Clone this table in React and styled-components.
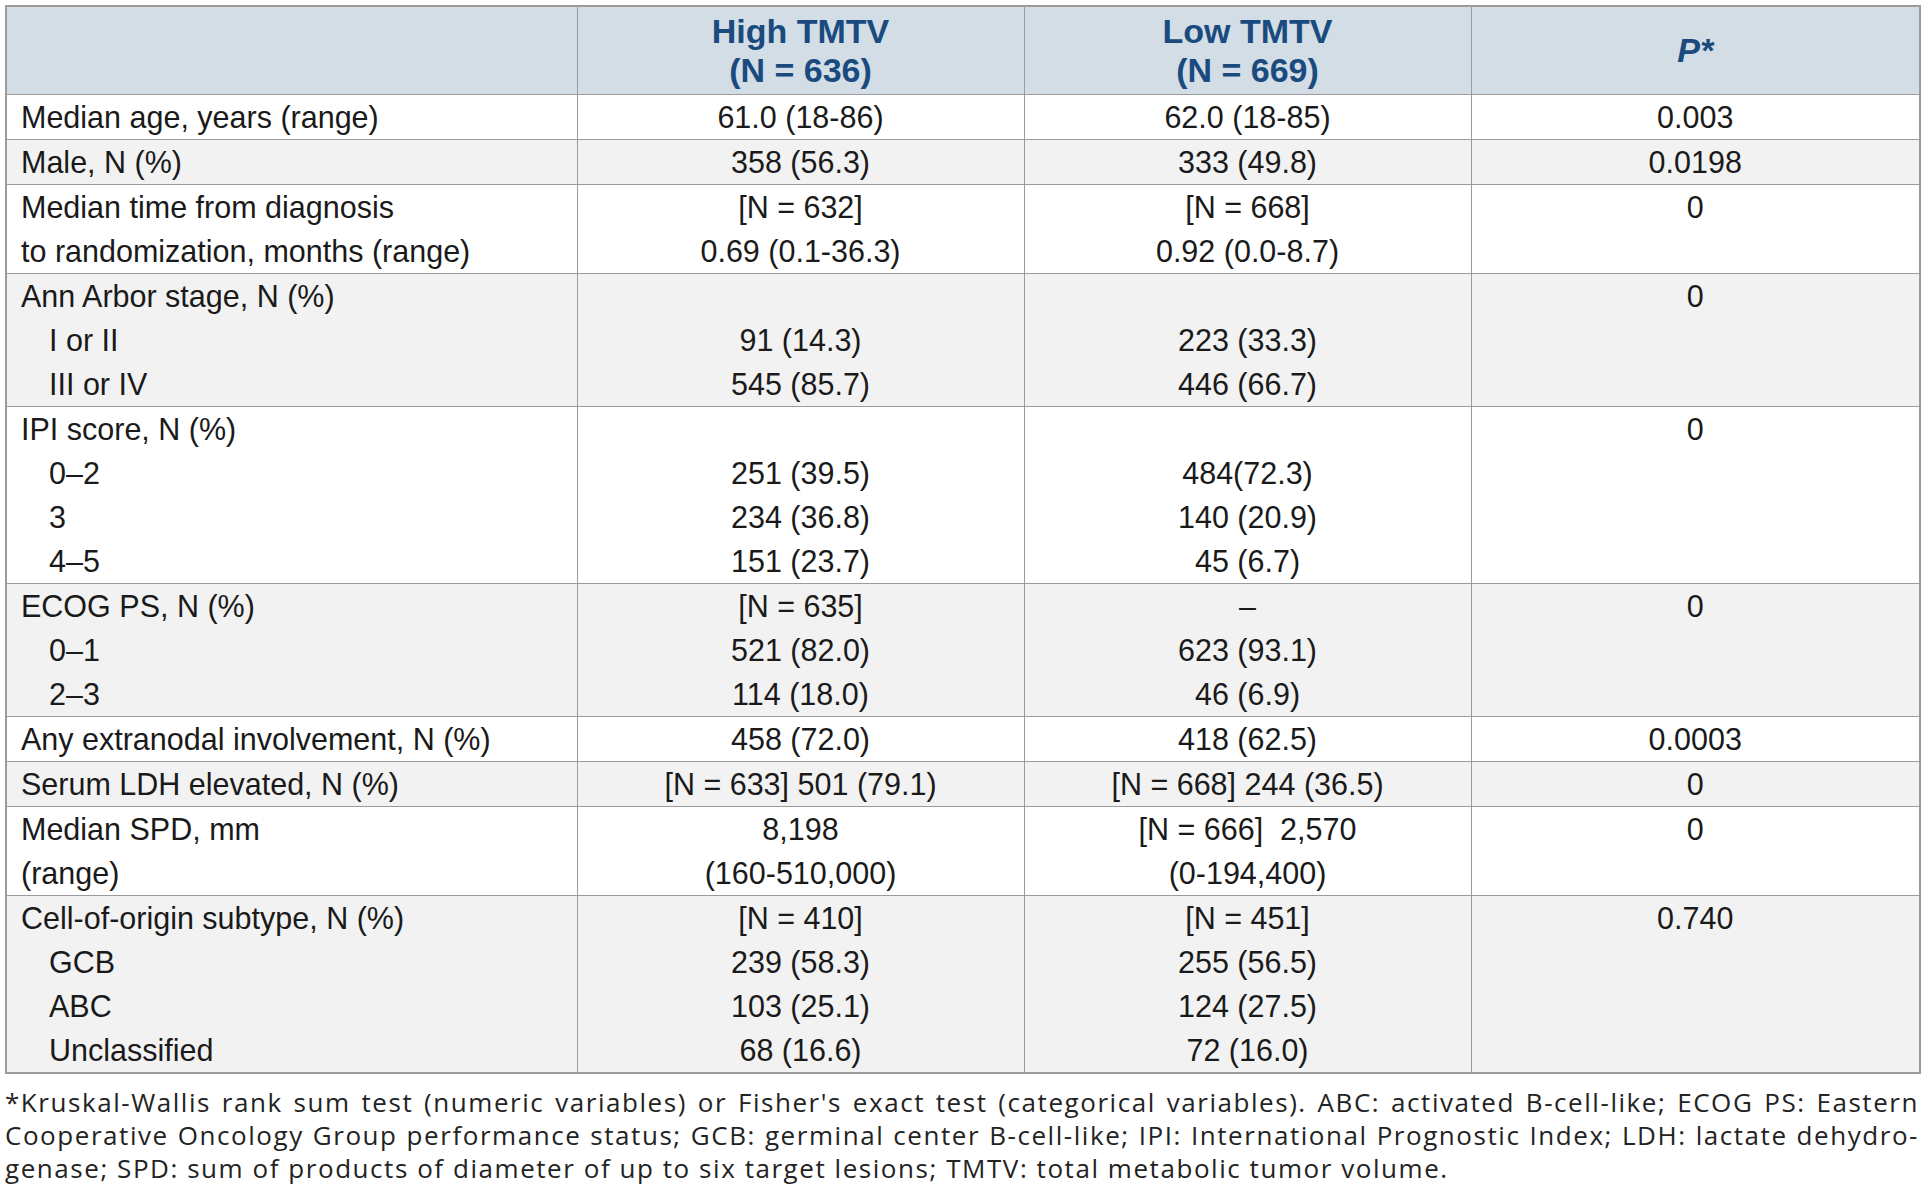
import React from 'react';
import styled, { createGlobalStyle } from 'styled-components';

const GlobalStyle = createGlobalStyle`
  html, body {
    margin: 0;
    padding: 0;
    background: #ffffff;
  }
`;

const Page = styled.div`
  padding: 5px 10px 0 5px;
  width: 1914px;
  font-family: "Liberation Sans", Arial, sans-serif;
  color: #1a1a1a;
`;

const Table = styled.table`
  width: 1914px;
  table-layout: fixed;
  border-collapse: collapse;
  border: 2px solid #9b9b9b;
`;

const HeadRow = styled.tr`
  background: #d3dde6;
`;

const HeadCell = styled.th`
  height: 87px;
  padding: 0;
  border-left: 1px solid #9b9b9b;
  border-bottom: 1px solid #9b9b9b;
  color: #1a4b7f;
  font-size: 34px;
  font-weight: 700;
  font-style: ${(p) => (p.$italic ? 'italic' : 'normal')};
  line-height: 39px;
  text-align: center;
  vertical-align: middle;
`;

const Row = styled.tr`
  background: ${(p) => (p.$shade ? '#f2f2f2' : '#ffffff')};
  border-bottom: 1px solid #9b9b9b;
`;

const Cell = styled.td`
  padding: 0;
  padding-left: ${(p) => (p.$label ? '14px' : '0')};
  border-left: 1px solid #9b9b9b;
  vertical-align: top;
  text-align: ${(p) => (p.$label ? 'left' : 'center')};
  font-size: 30.5px;
`;

const Line = styled.div`
  height: 44px;
  line-height: 44px;
  white-space: pre;
  padding-left: ${(p) => (p.$indent ? '28px' : '0')};
`;

const Notes = styled.div`
  margin-top: 12px;
  width: 1914px;
  font-family: "Open Sans", "Noto Sans", sans-serif;
  font-size: 26px;
  letter-spacing: 1.55px;
  color: #232323;
`;

const NoteLine = styled.div`
  height: 33px;
  line-height: 33px;
  white-space: nowrap;
  text-align: ${(p) => (p.$justify ? 'justify' : 'left')};
  text-align-last: ${(p) => (p.$justify ? 'justify' : 'left')};
`;

const rows = [
  {
    label: ['Median age, years (range)'],
    high: ['61.0 (18-86)'],
    low: ['62.0 (18-85)'],
    p: '0.003',
  },
  {
    label: ['Male, N (%)'],
    high: ['358 (56.3)'],
    low: ['333 (49.8)'],
    p: '0.0198',
  },
  {
    label: ['Median time from diagnosis', 'to randomization, months (range)'],
    high: ['[N = 632]', '0.69 (0.1-36.3)'],
    low: ['[N = 668]', '0.92 (0.0-8.7)'],
    p: '0',
  },
  {
    label: ['Ann Arbor stage, N (%)', '>I or II', '>III or IV'],
    high: ['', '91 (14.3)', '545 (85.7)'],
    low: ['', '223 (33.3)', '446 (66.7)'],
    p: '0',
  },
  {
    label: ['IPI score, N (%)', '>0–2', '>3', '>4–5'],
    high: ['', '251 (39.5)', '234 (36.8)', '151 (23.7)'],
    low: ['', '484(72.3)', '140 (20.9)', '45 (6.7)'],
    p: '0',
  },
  {
    label: ['ECOG PS, N (%)', '>0–1', '>2–3'],
    high: ['[N = 635]', '521 (82.0)', '114 (18.0)'],
    low: ['–', '623 (93.1)', '46 (6.9)'],
    p: '0',
  },
  {
    label: ['Any extranodal involvement, N (%)'],
    high: ['458 (72.0)'],
    low: ['418 (62.5)'],
    p: '0.0003',
  },
  {
    label: ['Serum LDH elevated, N (%)'],
    high: ['[N = 633] 501 (79.1)'],
    low: ['[N = 668] 244 (36.5)'],
    p: '0',
  },
  {
    label: ['Median SPD, mm', '(range)'],
    high: ['8,198', '(160-510,000)'],
    low: ['[N = 666]  2,570', '(0-194,400)'],
    p: '0',
  },
  {
    label: ['Cell-of-origin subtype, N (%)', '>GCB', '>ABC', '>Unclassified'],
    high: ['[N = 410]', '239 (58.3)', '103 (25.1)', '68 (16.6)'],
    low: ['[N = 451]', '255 (56.5)', '124 (27.5)', '72 (16.0)'],
    p: '0.740',
  },
];

function Lines({ items }) {
  return items.map((text, i) => {
    const indent = text.startsWith('>');
    return (
      <Line key={i} $indent={indent}>
        {indent ? text.slice(1) : text || '\u00a0'}
      </Line>
    );
  });
}

export default function App() {
  return (
    <Page>
      <GlobalStyle />
      <Table>
        <colgroup>
          <col style={{ width: 571 }} />
          <col style={{ width: 447 }} />
          <col style={{ width: 447 }} />
          <col style={{ width: 449 }} />
        </colgroup>
        <thead>
          <HeadRow>
            <HeadCell />
            <HeadCell>High TMTV<br />(N = 636)</HeadCell>
            <HeadCell>Low TMTV<br />(N = 669)</HeadCell>
            <HeadCell $italic>P*</HeadCell>
          </HeadRow>
        </thead>
        <tbody>
          {rows.map((r, i) => (
            <Row key={i} $shade={i % 2 === 1}>
              <Cell $label><Lines items={r.label} /></Cell>
              <Cell><Lines items={r.high} /></Cell>
              <Cell><Lines items={r.low} /></Cell>
              <Cell><Lines items={[r.p]} /></Cell>
            </Row>
          ))}
        </tbody>
      </Table>
      <Notes>
        <NoteLine $justify>
          *Kruskal-Wallis rank sum test (numeric variables) or Fisher's exact test (categorical variables). ABC: activated B-cell-like; ECOG PS: Eastern
        </NoteLine>
        <NoteLine $justify>
          Cooperative Oncology Group performance status; GCB: germinal center B-cell-like; IPI: International Prognostic Index; LDH: lactate dehydro-
        </NoteLine>
        <NoteLine>
          genase; SPD: sum of products of diameter of up to six target lesions; TMTV: total metabolic tumor volume.
        </NoteLine>
      </Notes>
    </Page>
  );
}
